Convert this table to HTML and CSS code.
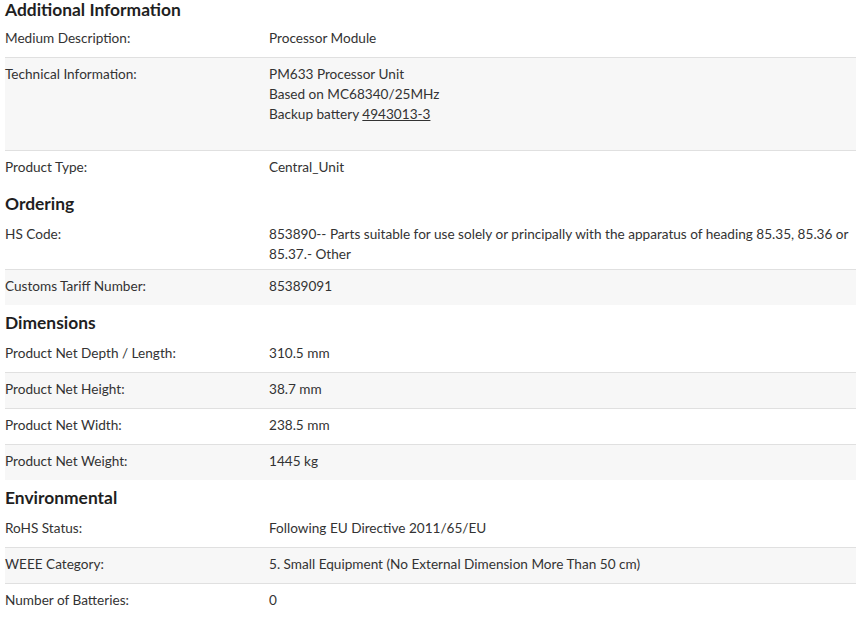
FILE: index.html
```html
<!DOCTYPE html>
<html lang="en">
<head>
<meta charset="utf-8">
<title>Additional Information</title>
<link rel="stylesheet" href="styles.css">
</head>
<body>
<div class="details">
  <section class="group first">
    <h2 class="group-title">Additional Information</h2>
    <div class="row"><div class="label">Medium Description:</div><div class="value">Processor Module</div></div>
    <div class="row"><div class="label">Technical Information:</div><div class="value tall">PM633 Processor Unit<br>Based on MC68340/25MHz<br>Backup battery <a href="#" class="link">4943013-3</a></div></div>
    <div class="row"><div class="label">Product Type:</div><div class="value">Central_Unit</div></div>
  </section>
  <section class="group">
    <h2 class="group-title">Ordering</h2>
    <div class="row"><div class="label">HS Code:</div><div class="value">853890-- Parts suitable for use solely or principally with the apparatus of heading 85.35, 85.36 or 85.37.- Other</div></div>
    <div class="row"><div class="label">Customs Tariff Number:</div><div class="value">85389091</div></div>
  </section>
  <section class="group">
    <h2 class="group-title">Dimensions</h2>
    <div class="row"><div class="label">Product Net Depth / Length:</div><div class="value">310.5 mm</div></div>
    <div class="row"><div class="label">Product Net Height:</div><div class="value">38.7 mm</div></div>
    <div class="row"><div class="label">Product Net Width:</div><div class="value">238.5 mm</div></div>
    <div class="row"><div class="label">Product Net Weight:</div><div class="value">1445 kg</div></div>
  </section>
  <section class="group">
    <h2 class="group-title">Environmental</h2>
    <div class="row"><div class="label">RoHS Status:</div><div class="value">Following EU Directive 2011/65/EU</div></div>
    <div class="row"><div class="label">WEEE Category:</div><div class="value">5. Small Equipment (No External Dimension More Than 50 cm)</div></div>
    <div class="row"><div class="label">Number of Batteries:</div><div class="value">0</div></div>
  </section>
</div>
</body>
</html>
```
FILE: styles.css
```css
html, body {
  margin: 0;
  padding: 0;
  background: #ffffff;
}
body {
  font-family: Lato, "Liberation Sans", sans-serif;
  font-size: 13.6px;
  line-height: 20px;
  color: #333333;
}
.details {
  padding-left: 5px;
}
.group-title {
  margin: 0;
  padding: 8px 0 4px;
  font-size: 17.4px;
  line-height: 20px;
  font-weight: 700;
  color: #1f1f1f;
}
.group.first .group-title {
  padding: 0 0 2px;
}
.row {
  display: grid;
  grid-template-columns: 264px 1fr;
  min-height: 24px;
  padding: 6px 0 5px;
}
.row + .row {
  border-top: 1px solid #e0e0e0;
}
.row:nth-of-type(even) {
  background: #f7f7f7;
}
.label, .value {
  line-height: 20px;
}
.value.tall {
  padding-bottom: 21px;
}
.link {
  color: inherit;
  text-decoration: underline;
}
```
